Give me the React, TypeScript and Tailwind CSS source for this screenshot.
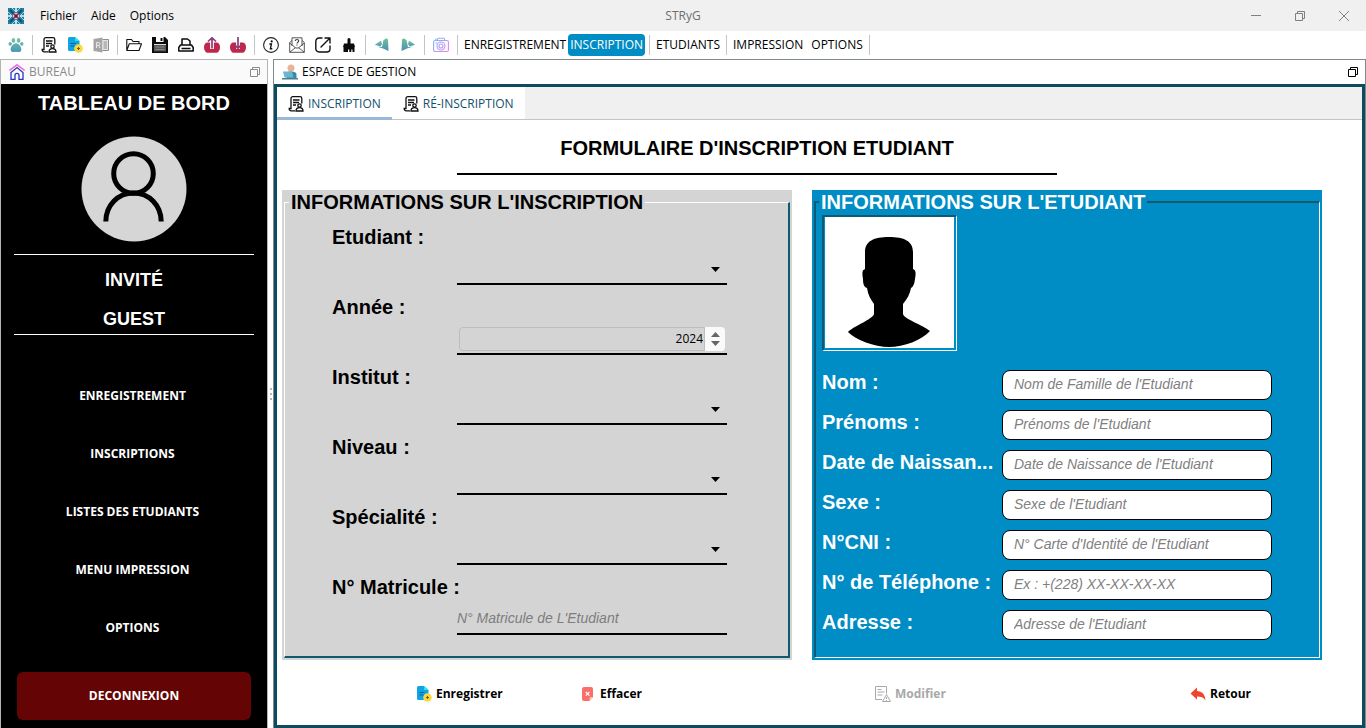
import React, { useState } from "react";

type IconProps = { className?: string };

const ui = "font-['Open_Sans',sans-serif]";

function AppLogo() {
  return (
    <svg viewBox="0 0 16 16" className="size-4 shrink-0" aria-hidden="true">
      <rect width="16" height="16" fill="#1d7ea6" />
      <path d="M8 0v4M8 12v4M0 8h4M12 8h4" stroke="#e8f4f8" strokeWidth="1.600" />
      <path d="M2 2l12 12M14 2L2 14" stroke="#0d4a66" strokeWidth="1.600" />
      <path d="M4 0l4 4 4-4M4 16l4-4 4 4M0 4l4 4-4 4M16 4l-4 4 4 4" stroke="#cfe8f0" fill="none" strokeWidth=".8" />
      <circle cx="8" cy="8" r="3.200" fill="#d9c5cc" />
      <path d="M5 5l6 6M11 5l-6 6" stroke="#a3203b" strokeWidth="1.500" />
      <circle cx="8" cy="8" r="1.500" fill="#3a2940" />
    </svg>
  );
}

function PawIcon() {
  return (
    <svg viewBox="0 0 16 16" className="size-4" aria-hidden="true">
      <defs>
        <linearGradient id="paw" x1="0" y1="0" x2="0" y2="16" gradientUnits="userSpaceOnUse">
          <stop offset="0" stopColor="#7cc9a0" />
          <stop offset="1" stopColor="#4793b8" />
        </linearGradient>
      </defs>
      <g fill="url(#paw)">
        <ellipse cx="5.400" cy="3.400" rx="1.800" ry="2.300" />
        <ellipse cx="10.600" cy="3.400" rx="1.800" ry="2.300" />
        <ellipse cx="2.200" cy="6.800" rx="1.700" ry="1.900" />
        <ellipse cx="13.800" cy="6.800" rx="1.700" ry="1.900" />
        <path d="M8 6.200c2.600 0 5.400 3.400 5.400 6 0 2-1.400 2.800-2.800 2.800-1 0-1.600-.3-2.600-.3s-1.600.3-2.600.3c-1.400 0-2.800-.8-2.800-2.800C2.600 9.600 5.400 6.200 8 6.200z" />
      </g>
    </svg>
  );
}

function FormUserIcon({ className = "size-4" }: IconProps) {
  return (
    <svg viewBox="0 0 16 16" className={className} fill="none" stroke="#111" strokeWidth="1.300" aria-hidden="true">
      <path d="M7 14.800H3.200a2 2 0 0 1-2-2.300H3V2.500A1.800 1.800 0 0 1 4.800.7H12a1.800 1.800 0 0 1 1.800 1.800v5" />
      <path d="M5 4h6.500M5 6.500h6M5 9h3" />
      <circle cx="11.500" cy="9.500" r="1.700" />
      <path d="M8 15c0-2.300 1.400-3.300 3.500-3.300S15 12.700 15 15z" />
    </svg>
  );
}

function DocAddIcon() {
  return (
    <svg viewBox="0 0 16 16" className="size-4 shrink-0" aria-hidden="true">
      <path d="M2.500 0H8l4.500 4V14h-10A1.500 1.500 0 0 1 1 12.500v-11A1.500 1.500 0 0 1 2.500 0z" fill="#0fa5e4" />
      <path d="M8 0l4.500 4H8z" fill="#35e0e0" />
      <path d="M3.500 6.500h5M3.500 9h4" stroke="#0b5fa8" />
      <circle cx="11.500" cy="11.500" r="4.300" fill="#fbd93d" />
      <path d="M11.500 10v3M10 11.500h3" stroke="#7a5a10" />
    </svg>
  );
}

function BookRIcon() {
  return (
    <svg viewBox="0 0 16 16" className="size-4" aria-hidden="true">
      <path d="M.5 2l9-1.500v15l-9-1.500z" fill="#a5a5a5" />
      <path d="M9.500 2.500h6v11h-6" fill="#e4e4e4" stroke="#8d8d8d" />
      <path d="M10.500 5h3.500M10.500 7h3.500M10.500 9h3.500M10.500 11h3.500" stroke="#8d8d8d" />
      <path d="M3.600 11V5.500h1.900a1.400 1.400 0 0 1 0 2.900H3.600M5.400 8.400L7 11" fill="none" stroke="#eee" />
    </svg>
  );
}

function FolderIcon() {
  return (
    <svg viewBox="0 0 16 16" className="size-4" fill="none" stroke="#111" strokeWidth="1.100" strokeLinejoin="round" aria-hidden="true">
      <path d="M.8 13.500V2.500h4.700l1.500 2h6v2.300M.8 13.500l2.500-6.700h12.200l-2.500 6.700z" />
    </svg>
  );
}

function SaveIcon() {
  return (
    <svg viewBox="0 0 16 16" className="size-4" aria-hidden="true">
      <path d="M0 0h13l3 3v13H0z" fill="#0b0b0b" />
      <path d="M4 0h7.500v5H4z" fill="#fff" />
      <path d="M8.500 1h2v3h-2z" fill="#0b0b0b" />
      <path d="M2 8h12v6.500H2z" fill="#555" />
      <path d="M2 7.500h12" stroke="#ddd" />
      <path d="M3.500 10h9M3.500 12.500h9" stroke="#888" />
    </svg>
  );
}

function PrinterIcon() {
  return (
    <svg viewBox="0 0 16 16" className="size-4" fill="none" stroke="#0b0b0b" strokeWidth="1.500" strokeLinejoin="round" aria-hidden="true">
      <path d="M4 8V2h5.500L12 4v4M2.500 8h11l1.700 2.500V14H.8v-3.500zM3.500 11.500h9" />
    </svg>
  );
}

function BasketIcon({ down = false }: { down?: boolean }) {
  return (
    <svg viewBox="0 0 16 16" className="size-4" aria-hidden="true">
      <path d="M3 5.500h10c1.800.5 3 2.200 3 4.500 0 3-1.600 5.800-3.500 5.800h-9C1.600 15.800 0 13 0 10c0-2.300 1.200-4 3-4.500z" fill="#c0264b" />
      <path d="M8 4v8" stroke="#fff" strokeWidth="3.800" />
      <path d={down ? "M8 0v11M4.800 8L8 11.200 11.200 8" : "M8 11.500V1M4 4.500L8 .8l4 3.700"} fill="none" stroke="#8c3b76" strokeWidth="1.700" />
    </svg>
  );
}

function InfoIcon() {
  return (
    <svg viewBox="0 0 16 16" className="size-4" aria-hidden="true">
      <circle cx="8" cy="8" r="7.400" fill="#fff" stroke="#222" strokeWidth="1.100" />
      <circle cx="8.700" cy="4.400" r="1.100" fill="#111" />
      <path d="M6.400 7h2l-1 4.800h1.900" fill="none" stroke="#111" strokeWidth="1.400" />
    </svg>
  );
}

function MailHelpIcon() {
  return (
    <svg viewBox="0 0 16 16" className="size-4" fill="none" stroke="#444" strokeWidth=".9" aria-hidden="true">
      <path d="M3 9V.8h10V9M3 3.500L.7 5.500v9.800h14.600V5.500L13 3.500M.7 6l6 5h2.600l6-5M.7 15.300L6.500 10.500M15.300 15.300L9.500 10.500" />
      <path d="M6.300 4c0-2 3.400-2 3.400 0 0 1.200-1.700 1.200-1.700 2.600M8 7.600v1" strokeWidth="1.200" />
    </svg>
  );
}

function ExternalIcon() {
  return (
    <svg viewBox="0 0 16 16" className="size-4" fill="none" stroke="#111" strokeWidth="1.400" strokeLinecap="round" strokeLinejoin="round" aria-hidden="true">
      <path d="M7 1H4a3.200 3.200 0 0 0-3.200 3.200v7.600A3.200 3.200 0 0 0 4 15h7.800a3.200 3.200 0 0 0 3.200-3.200V9M6 10l8.500-8.500M10 1h5v5" />
    </svg>
  );
}

function BrushIcon() {
  return (
    <svg viewBox="0 0 16 16" className="size-4" fill="#0b0b0b" aria-hidden="true">
      <path d="M6.500 2.500a1.500 1.500 0 0 1 3 0V6.500H13l1 3.500H2l1-3.500h3.500z" />
      <path d="M2.500 9.500h11V15h-2v-2.500h-1.200V15h-2v-2.500H7V15H2.500z" />
    </svg>
  );
}

function LeafArrow({ flip = false }: { flip?: boolean }) {
  return (
    <svg viewBox="0 0 16 16" className={flip ? "size-4 -scale-x-100" : "size-4"} aria-hidden="true">
      <defs>
        <linearGradient id="leaf" x1="0" y1="1" x2="0" y2="15" gradientUnits="userSpaceOnUse">
          <stop offset="0" stopColor="#70c795" />
          <stop offset="1" stopColor="#4a86bd" />
        </linearGradient>
      </defs>
      <g fill="url(#leaf)">
        <path d="M.8 7.800L7 3.800l1 3.200-1.500 2.500z" />
        <path d="M9.500 3l3-1.800 1.500 1.300L14.500 14 9 11.500 3.500 9.800l4.500.2z" />
      </g>
    </svg>
  );
}

function CameraIcon() {
  return (
    <svg viewBox="0 0 16 16" className="size-4" fill="none" strokeWidth="1.100" aria-hidden="true">
      <defs>
        <linearGradient id="cam" x1="0" y1="0" x2="16" y2="16" gradientUnits="userSpaceOnUse">
          <stop offset="0" stopColor="#6fc0f8" />
          <stop offset="1" stopColor="#ee7cf2" />
        </linearGradient>
      </defs>
      <g stroke="url(#cam)">
        <rect x=".6" y="3.500" width="14.800" height="11" rx="1.500" />
        <path d="M4 3.500l1-2.300h6l1 2.300M2 2.200h1.500M2.500 6h1.500" />
        <circle cx="8" cy="9" r="4" />
        <circle cx="8" cy="9" r="2" />
      </g>
    </svg>
  );
}

function HouseIcon() {
  return (
    <svg viewBox="0 0 16 16" className="size-4" fill="none" aria-hidden="true">
      <path d="M.4 6.500L8 .8l7.600 5.700" stroke="#f06ad8" strokeWidth="1.500" />
      <path d="M2 8.500l6-5 6 5v6.800h-4v-4a2 2 0 0 0-4 0v4H2z" stroke="#2b34c4" strokeWidth="1.300" />
    </svg>
  );
}

function DeskIcon() {
  return (
    <svg viewBox="0 0 16 16" className="size-4" aria-hidden="true">
      <circle cx="9" cy="4" r="3.500" fill="#e9b394" />
      <path d="M4.500 13V10c0-2 2-2.500 4.500-2.500s5.500.8 5.500 3V14h-10z" fill="#3c87a8" />
      <path d="M1 7.500h9l1.500 6H2.500z" fill="#68b7cf" />
      <path d="M0 14h16v1.500H0z" fill="#4b7f8f" />
    </svg>
  );
}

function RestoreIcon({ className = "size-[10px]" }: IconProps) {
  return (
    <svg viewBox="0 0 10 10" className={className} fill="none" stroke="currentColor" aria-hidden="true">
      <path d="M.5 2.500h7v7h-7zM2.500 2.500v-2h7v7h-2" />
    </svg>
  );
}

function DeleteDocIcon() {
  return (
    <svg viewBox="0 0 16 16" className="size-4 shrink-0" aria-hidden="true">
      <path d="M4 1h7a2 2 0 0 1 2 2v8l-3.500 4H4a2 2 0 0 1-2-2V3a2 2 0 0 1 2-2z" fill="#fa6f6b" />
      <path d="M13 11h-2a1.500 1.500 0 0 0-1.500 1.500V15z" fill="#ffc1bc" />
      <path d="M5.800 6l3.600 3.600M9.400 6L5.800 9.600" stroke="#fff" strokeWidth="1.200" />
    </svg>
  );
}

function EditWarnIcon() {
  return (
    <svg viewBox="0 0 16 16" className="size-4 shrink-0" fill="none" stroke="#a8a8a8" aria-hidden="true">
      <path d="M7 13.500H.5V.5h11v7M2.500 3.500h4M2.500 6h7M2.500 9h5" />
      <path d="M11.500 8.500l4 7h-8zM11.500 11v2M11.500 14v1" />
    </svg>
  );
}

function ReplyIcon() {
  return (
    <svg viewBox="0 0 16 16" className="size-4 shrink-0" aria-hidden="true">
      <path d="M.5 7.500L7 1.500V5c5 .2 8.300 3.500 8.500 9.500-1.800-3-4.500-3.900-8.500-3.900V13.500z" fill="#f0442e" />
    </svg>
  );
}

function Separator() {
  return <span className="h-5 w-px shrink-0 bg-[#c4c4c4]" />;
}

type Tool = { label: string; icon: React.ReactNode };

function ToolGroup({ tools }: { tools: Tool[] }) {
  return (
    <div className="flex items-center gap-[10px] px-2">
      {tools.map((t) => (
        <button key={t.label} type="button" aria-label={t.label} className="flex size-4 items-center justify-center">
          {t.icon}
        </button>
      ))}
    </div>
  );
}

function TextTool({ children, active = false }: { children: string; active?: boolean }) {
  return (
    <button
      type="button"
      className={active ? "h-[22px] rounded bg-[#008cc4] px-0.5 text-white" : "h-[22px] px-0.5 text-black"}
    >
      {children}
    </button>
  );
}

function Toolbar() {
  return (
    <div className="flex h-7 shrink-0 items-center overflow-hidden bg-white text-xs whitespace-nowrap">
      <ToolGroup tools={[{ label: "Accueil", icon: <PawIcon /> }]} />
      <Separator />
      <ToolGroup
        tools={[
          { label: "Formulaire", icon: <FormUserIcon /> },
          { label: "Nouveau", icon: <DocAddIcon /> },
          { label: "Registre", icon: <BookRIcon /> },
        ]}
      />
      <Separator />
      <ToolGroup
        tools={[
          { label: "Ouvrir", icon: <FolderIcon /> },
          { label: "Sauvegarder", icon: <SaveIcon /> },
          { label: "Imprimer", icon: <PrinterIcon /> },
          { label: "Exporter", icon: <BasketIcon /> },
          { label: "Importer", icon: <BasketIcon down /> },
        ]}
      />
      <Separator />
      <ToolGroup
        tools={[
          { label: "Informations", icon: <InfoIcon /> },
          { label: "Contact", icon: <MailHelpIcon /> },
          { label: "Lien", icon: <ExternalIcon /> },
          { label: "Nettoyer", icon: <BrushIcon /> },
        ]}
      />
      <Separator />
      <ToolGroup
        tools={[
          { label: "Précédent", icon: <LeafArrow /> },
          { label: "Suivant", icon: <LeafArrow flip /> },
        ]}
      />
      <Separator />
      <ToolGroup tools={[{ label: "Capture", icon: <CameraIcon /> }]} />
      <Separator />
      <div className="flex px-1">
        <TextTool>ENREGISTREMENT</TextTool>
        <TextTool active>INSCRIPTION</TextTool>
      </div>
      <Separator />
      <div className="flex px-1">
        <TextTool>ETUDIANTS</TextTool>
      </div>
      <Separator />
      <div className="flex gap-1 px-1">
        <TextTool>IMPRESSION</TextTool>
        <TextTool>OPTIONS</TextTool>
      </div>
      <Separator />
    </div>
  );
}

function TitleBar() {
  return (
    <header className="grid h-[31px] shrink-0 grid-cols-[1fr_auto_1fr] items-center bg-[#f0f0f0] pl-2 text-xs">
      <div className="flex items-center">
        <AppLogo />
        <nav className="flex gap-[14px] pl-4">
          <button type="button">Fichier</button>
          <button type="button">Aide</button>
          <button type="button">Options</button>
        </nav>
      </div>
      <h1 className="pr-2 text-[#6f6f6f]">STRyG</h1>
      <div className="flex justify-end text-[#808080]">
        <button type="button" aria-label="Réduire" className="flex h-[31px] w-11 items-center justify-center">
          <span className="h-px w-[10px] bg-current" />
        </button>
        <button type="button" aria-label="Restaurer" className="flex h-[31px] w-11 items-center justify-center">
          <RestoreIcon />
        </button>
        <button type="button" aria-label="Fermer" className="flex h-[31px] w-11 items-center justify-center">
          <svg viewBox="0 0 10 10" className="size-[10px]" stroke="currentColor" aria-hidden="true">
            <path d="M0 0l10 10M10 0L0 10" />
          </svg>
        </button>
      </div>
    </header>
  );
}

const menu = ["ENREGISTREMENT", "INSCRIPTIONS", "LISTES DES ETUDIANTS", "MENU IMPRESSION", "OPTIONS"];

function Sidebar() {
  return (
    <aside className="flex w-[268px] shrink-0 flex-col border-x border-t border-[#b4b4b4]">
      <div className="flex h-6 shrink-0 items-center gap-1 bg-[#fafafa] pr-[7px] pl-2 text-xs text-[#8a8a8a]">
        <HouseIcon />
        <span className="grow">BUREAU</span>
        <button type="button" aria-label="Détacher le bureau">
          <RestoreIcon />
        </button>
      </div>
      <div className="flex grow flex-col bg-black px-[13px] text-center text-white">
        <h2 className="h-[52px] pt-[5px] font-['Liberation_Sans',sans-serif] text-xl leading-7 font-bold">TABLEAU DE BORD</h2>
        <svg viewBox="0 0 106 106" className="size-[106px] self-center" aria-hidden="true">
          <circle cx="53" cy="53" r="52.500" fill="#d6d6d6" />
          <g fill="none" stroke="#000" strokeWidth="5">
            <circle cx="52.500" cy="37.500" r="19.800" />
            <path d="M24.800 85.500c0-16 12-28.500 27.700-28.500s27.700 12.500 27.700 28.500" />
          </g>
        </svg>
        <div className="mt-3 flex flex-col gap-[11px] border-y border-white pt-[11px] pb-px font-['Liberation_Sans',sans-serif] text-lg font-bold">
          <p>INVITÉ</p>
          <p>GUEST</p>
        </div>
        <nav className="mt-8 flex flex-col pr-[3px] text-xs font-bold">
          {menu.map((m) => (
            <button key={m} type="button" className="h-[58px]">
              {m}
            </button>
          ))}
        </nav>
        <button type="button" className="mx-[3px] mt-[15px] mb-2 h-12 rounded-md bg-[#640404] text-xs font-bold">
          DECONNEXION
        </button>
      </div>
    </aside>
  );
}

function UnderlineSelect({ id }: { id: string }) {
  return (
    <div className="relative h-[30px] border-b-2 border-black">
      <select id={id} defaultValue="" className="h-full w-full appearance-none bg-transparent outline-none">
        <option value=""></option>
      </select>
      <svg viewBox="0 0 9 5" className="pointer-events-none absolute top-3 right-[7px] h-[5px] w-[9px]" aria-hidden="true">
        <path d="M0 0h9L4.500 5z" fill="#000" />
      </svg>
    </div>
  );
}

function YearInput({ id }: { id: string }) {
  const [year, setYear] = useState(2024);
  return (
    <div className={`flex h-[30px] border-b-2 border-black px-0.5 pt-0.5 pb-0.5 text-xs ${ui}`}>
      <input
        id={id}
        type="number"
        value={year}
        onChange={(e) => setYear(Number(e.target.value))}
        className="min-w-0 grow appearance-none rounded-l-sm border border-[#bdbdbd] bg-transparent pr-px text-right outline-none [-moz-appearance:textfield] [&::-webkit-inner-spin-button]:appearance-none"
      />
      <div className="flex w-5 flex-col items-center justify-center rounded-r-sm bg-[#fafafa]">
        <button type="button" aria-label="Année suivante" onClick={() => setYear(year + 1)} className="flex h-[9px] items-center">
          <svg viewBox="0 0 9 5" className="h-[5px] w-[9px]"><path d="M0 5h9L4.500 0z" fill="#666" /></svg>
        </button>
        <button type="button" aria-label="Année précédente" onClick={() => setYear(year - 1)} className="flex h-[9px] items-center">
          <svg viewBox="0 0 9 5" className="h-[5px] w-[9px]"><path d="M0 0h9L4.500 5z" fill="#666" /></svg>
        </button>
      </div>
    </div>
  );
}

const enrolment = [
  { id: "etudiant", label: "Etudiant :", kind: "select" },
  { id: "annee", label: "Année :", kind: "year" },
  { id: "institut", label: "Institut :", kind: "select" },
  { id: "niveau", label: "Niveau :", kind: "select" },
  { id: "specialite", label: "Spécialité :", kind: "select" },
  { id: "matricule", label: "N° Matricule :", kind: "text" },
];

function EnrolmentPanel() {
  return (
    <section className="bg-[#d4d4d4] px-0.5 pb-0.5">
      <fieldset className="h-full border-t border-r-2 border-b-2 border-l border-t-white border-r-[#0f5a70] border-b-[#0f5a70] border-l-white pr-[61px] pl-1">
        <legend className="px-0.5 text-xl leading-6 font-bold">INFORMATIONS SUR L'INSCRIPTION</legend>
        <div className="mt-2 flex flex-col gap-[7px] pb-[21px] pl-[43px]">
          {enrolment.map((f) => (
            <div key={f.id} className="flex flex-col gap-[3px]">
              <label htmlFor={f.id} className="h-[30px] text-xl leading-[30px] font-bold">
                {f.label}
              </label>
              <div className="ml-[125px]">
                {f.kind === "select" && <UnderlineSelect id={f.id} />}
                {f.kind === "year" && <YearInput id={f.id} />}
                {f.kind === "text" && (
                  <input
                    id={f.id}
                    type="text"
                    placeholder="N° Matricule de L'Etudiant"
                    className="block h-[30px] w-full border-b-2 border-black bg-transparent pb-0.5 text-sm outline-none placeholder:text-[#7d7d7d] placeholder:italic"
                  />
                )}
              </div>
            </div>
          ))}
        </div>
      </fieldset>
    </section>
  );
}

const student = [
  { id: "nom", label: "Nom :", hint: "Nom de Famille de l'Etudiant" },
  { id: "prenoms", label: "Prénoms :", hint: "Prénoms de l'Etudiant" },
  { id: "naissance", label: "Date de Naissan...", hint: "Date de Naissance de l'Etudiant" },
  { id: "sexe", label: "Sexe :", hint: "Sexe de l'Etudiant" },
  { id: "cni", label: "N°CNI :", hint: "N° Carte d'Identité de l'Etudiant" },
  { id: "telephone", label: "N° de Téléphone :", hint: "Ex : +(228) XX-XX-XX-XX" },
  { id: "adresse", label: "Adresse :", hint: "Adresse de l'Etudiant" },
];

function StudentPanel() {
  return (
    <section className="bg-[#008cc4] px-0.5 pb-0.5 text-white">
      <fieldset className="h-full border-t-2 border-r border-b border-l-2 border-t-[#0f5a70] border-r-white border-b-white border-l-[#0f5a70] pr-[47px] pl-[3px]">
        <legend className="px-0.5 text-xl leading-6 font-bold">INFORMATIONS SUR L'ETUDIANT</legend>
        <div className="mt-px ml-[3px] w-[135px] border-t-2 border-r border-b border-l-2 border-t-[#0f5a70] border-r-white border-b-white border-l-[#0f5a70] pr-0.5 pb-0.5 pl-px">
          <svg viewBox="0 0 129 131" className="block w-full bg-white" role="img" aria-label="Photo de l'étudiant">
            <path
              d="M64 20c15 0 24 4 24 15v17c3 1 3 4 2 10-.5 5-2 8-4 9-1 6-4 11-8 16v10c1 5 20 11 27 17-8 9-26 16-41 16s-33-7-41-15c6-6 25-13 26-18V87c-3-4-6-9-7-16-3-1-4-4-4-9-1-6-1-9 2-10V35c0-11 9-15 24-15z"
              fill="#000"
            />
          </svg>
        </div>
        <div className="mt-[19px] ml-[3px] flex flex-col gap-[10px] pb-4">
          {student.map((f) => (
            <div key={f.id} className="flex items-start">
              <label htmlFor={f.id} className="w-[180px] shrink-0 text-xl leading-6 font-bold">
                {f.label}
              </label>
              <input
                id={f.id}
                type="text"
                placeholder={f.hint}
                className="h-[30px] min-w-0 grow rounded-lg border border-black bg-white px-[11px] pb-0.5 text-sm text-black outline-none placeholder:text-[#808080] placeholder:italic"
              />
            </div>
          ))}
        </div>
      </fieldset>
    </section>
  );
}

function ActionButton({ icon, children, disabled = false }: { icon: React.ReactNode; children: string; disabled?: boolean }) {
  return (
    <button type="button" disabled={disabled} className="flex items-center gap-1 text-xs font-bold disabled:text-[#a8a8a8]">
      {icon}
      {children}
    </button>
  );
}

function Workspace() {
  return (
    <main className="flex min-w-0 grow flex-col border-x border-t border-[#7f8a8c]">
      <div className="flex h-6 shrink-0 items-center gap-1 bg-white pr-[7px] pl-2 text-xs">
        <DeskIcon />
        <h2 className="grow">ESPACE DE GESTION</h2>
        <button type="button" aria-label="Détacher l'espace de gestion">
          <RestoreIcon />
        </button>
      </div>
      <div className="flex grow flex-col border-[3px] border-[#0d4c5f] bg-white">
        <div role="tablist" className="flex h-[33px] shrink-0 border-b border-[#c4c4c4] bg-[#f0f0f0] text-xs text-[#12506b]">
          <button type="button" role="tab" aria-selected="true" className="-mb-px flex items-center gap-1 border-b-[3px] border-[#9bb8d8] bg-white px-[11px] pt-[3px]">
            <FormUserIcon />
            INSCRIPTION
          </button>
          <button type="button" role="tab" aria-selected="false" className="flex items-center gap-1 bg-white px-[11px] pt-px">
            <FormUserIcon />
            RÉ-INSCRIPTION
          </button>
        </div>
        <form className="flex flex-col pr-10 pl-[5px] font-['Liberation_Sans',sans-serif]">
          <h2 className="mt-[14px] mb-[15px] ml-[175px] w-[600px] border-b-2 border-black pb-[11px] text-center text-xl leading-7 font-bold">
            FORMULAIRE D'INSCRIPTION ETUDIANT
          </h2>
          <div className="grid grid-cols-2 gap-5">
            <EnrolmentPanel />
            <StudentPanel />
          </div>
          <div className={`flex pt-[26px] pb-5 ${ui}`}>
            <div className="ml-[134px] w-[164px]">
              <ActionButton icon={<DocAddIcon />}>Enregistrer</ActionButton>
            </div>
            <div className="grow">
              <ActionButton icon={<DeleteDocIcon />}>Effacer</ActionButton>
            </div>
            <div className="w-[315px]">
              <ActionButton icon={<EditWarnIcon />} disabled>Modifier</ActionButton>
            </div>
            <div className="w-[132px]">
              <ActionButton icon={<ReplyIcon />}>Retour</ActionButton>
            </div>
          </div>
        </form>
      </div>
    </main>
  );
}

export default function App() {
  return (
    <div className={`flex min-h-screen flex-col bg-white text-black ${ui}`}>
      <TitleBar />
      <Toolbar />
      <div className="flex grow">
        <Sidebar />
        <div className="flex w-[5px] shrink-0 flex-col items-center justify-center gap-[3px]">
          <span className="size-0.5 bg-[#b4b4b4]" />
          <span className="size-0.5 bg-[#b4b4b4]" />
          <span className="size-0.5 bg-[#b4b4b4]" />
        </div>
        <Workspace />
      </div>
    </div>
  );
}
